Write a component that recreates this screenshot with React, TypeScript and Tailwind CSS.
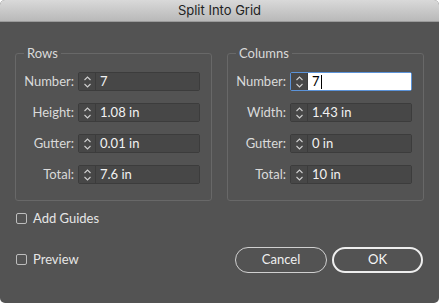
import React from "react";

const font = { fontFamily: '"Lato", "Open Sans", sans-serif' };

function Spinner() {
  return (
    <svg width="9" height="14" viewBox="0 0 9 14" fill="none" stroke="#cfcfcf" strokeWidth="1.1">
      <path d="M1.5 5 L4.5 2 L7.5 5" />
      <path d="M1.5 9 L4.5 12 L7.5 9" />
    </svg>
  );
}

function Field({ label, value, focused }: { label: string; value: string; focused?: boolean }) {
  return (
    <div className="flex items-center h-[19px]">
      <span className="w-[61px] pr-[3px] text-right text-[13px] text-[#dadada]">{label}</span>
      <div
        className={
          "flex h-[19px] ml-[1px] w-[122px] rounded-[2px] border " +
          (focused ? "border-[#5b93d9]" : "border-[#3c3c3c]")
        }
      >
        <div className="w-[17px] flex items-center justify-center border-r border-[#3c3c3c] bg-[#474747]">
          <Spinner />
        </div>
        <div
          className={
            "flex-1 flex items-center pl-[4px] text-[13px] " +
            (focused ? "bg-white text-black" : "bg-[#474747] text-[#f2f2f2]")
          }
        >
          {value}
          {focused && <span className="w-px h-[14px] bg-black ml-[1px]" />}
        </div>
      </div>
    </div>
  );
}

function Group({ title, fields }: { title: string; fields: [string, string, boolean?][] }) {
  return (
    <fieldset className="w-[197px] h-[155px] border border-[#686868] rounded-[3px] pl-0 pt-[12px]">
      <legend className="ml-[8px] px-[3px] text-[13px] text-[#dadada] leading-[14px]">{title}</legend>
      <div className="flex flex-col gap-[12px]">
        {fields.map(([l, v, f]) => (
          <Field key={l} label={l} value={v} focused={f} />
        ))}
      </div>
    </fieldset>
  );
}

function Check({ label }: { label: string }) {
  return (
    <div className="flex items-center gap-[6px]">
      <div className="w-[11px] h-[11px] border border-[#bdbdbd] rounded-[2px]" />
      <span className="text-[13px] text-[#e6e6e6]">{label}</span>
    </div>
  );
}

export default function App() {
  return (
    <div className="w-[439px] h-[303px] bg-[#535353] rounded-[5px] overflow-hidden flex flex-col" style={font}>
      <div className="h-[22px] bg-gradient-to-b from-[#d9d9d9] to-[#b9b9b9] border-b border-[#9a9a9a] flex items-center justify-center">
        <span className="text-[13px] text-[#222]" style={{ fontFamily: '"Inter", "Noto Sans", sans-serif' }}>
          Split Into Grid
        </span>
      </div>
      <div className="flex gap-[15px] pl-[15px] pt-[24px]">
        <Group
          title="Rows"
          fields={[
            ["Number:", "7"],
            ["Height:", "1.08 in"],
            ["Gutter:", "0.01 in"],
            ["Total:", "7.6 in"],
          ]}
        />
        <Group
          title="Columns"
          fields={[
            ["Number:", "7", true],
            ["Width:", "1.43 in"],
            ["Gutter:", "0 in"],
            ["Total:", "10 in"],
          ]}
        />
      </div>
      <div className="pl-[16px] mt-[8px]">
        <Check label="Add Guides" />
      </div>
      <div className="flex items-center pl-[16px] pr-[16px] mt-[18px]">
        <Check label="Preview" />
        <div className="ml-auto flex gap-[5px]">
          <button className="w-[92px] h-[26px] rounded-full border border-[#d0d0d0] text-[13px] text-[#f0f0f0]">
            Cancel
          </button>
          <button className="w-[91px] h-[26px] rounded-full border-2 border-[#eeeeee] text-[13px] text-[#f6f6f6]">
            OK
          </button>
        </div>
      </div>
    </div>
  );
}
